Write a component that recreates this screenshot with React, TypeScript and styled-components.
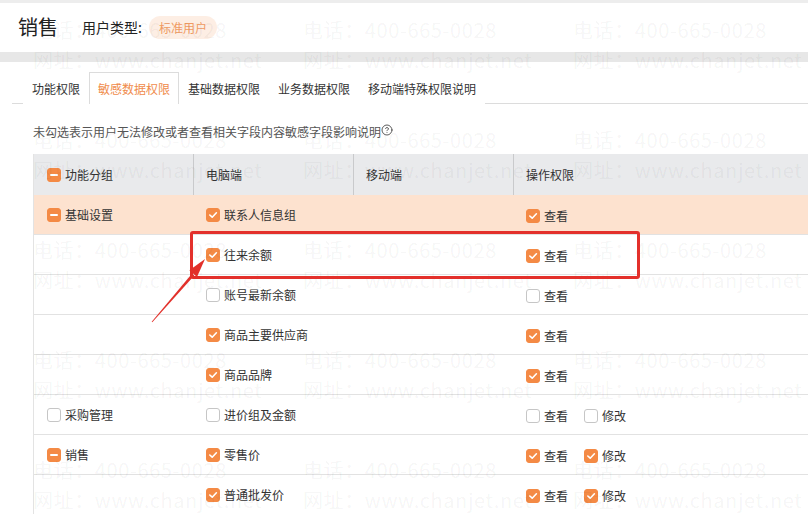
import React from "react";
import styled, { createGlobalStyle } from "styled-components";
import { CircleHelp } from "lucide-react";

type Mark = "checked" | "empty" | "partial";

interface Option {
  label: string;
  mark: Mark;
}

interface FieldRow {
  group?: Option;
  field: Option;
  ops: Option[];
  active?: boolean;
}

const view = (mark: Mark): Option => ({ label: "查看", mark });
const edit = (mark: Mark): Option => ({ label: "修改", mark });

const tabs = ["功能权限", "敏感数据权限", "基础数据权限", "业务数据权限", "移动端特殊权限说明"];

const rows: FieldRow[] = [
  {
    group: { label: "基础设置", mark: "partial" },
    field: { label: "联系人信息组", mark: "checked" },
    ops: [view("checked")],
    active: true,
  },
  { field: { label: "往来余额", mark: "checked" }, ops: [view("checked")] },
  { field: { label: "账号最新余额", mark: "empty" }, ops: [view("empty")] },
  { field: { label: "商品主要供应商", mark: "checked" }, ops: [view("checked")] },
  { field: { label: "商品品牌", mark: "checked" }, ops: [view("checked")] },
  {
    group: { label: "采购管理", mark: "empty" },
    field: { label: "进价组及金额", mark: "empty" },
    ops: [view("empty"), edit("empty")],
  },
  {
    group: { label: "销售", mark: "partial" },
    field: { label: "零售价", mark: "checked" },
    ops: [view("checked"), edit("checked")],
  },
  { field: { label: "普通批发价", mark: "checked" }, ops: [view("checked"), edit("checked")] },
];

const Box: React.FC<{ mark: Mark }> = ({ mark }) => (
  <CheckBox $on={mark !== "empty"}>
    {mark === "checked" && (
      <svg width="10" height="10" viewBox="0 0 10 10">
        <polyline points="1.8,5 4.2,7.2 8.4,2.8" fill="none" stroke="#fff" strokeWidth="1.6" strokeLinecap="round" strokeLinejoin="round" />
      </svg>
    )}
    {mark === "partial" && <Dash />}
  </CheckBox>
);

const Check: React.FC<Option> = ({ label, mark }) => (
  <CheckItem>
    <Box mark={mark} />
    <span>{label}</span>
  </CheckItem>
);

const App: React.FC = () => (
  <>
    <GlobalStyle />
    <Page>
      <TopStrip />
      <TitleBar>
        <Title>销售</Title>
        <TypeLabel>用户类型:</TypeLabel>
        <Badge>标准用户</Badge>
      </TitleBar>
      <Band />
      <TabBar>
        {tabs.map((t, i) => (
          <Tab key={t} $active={i === 1}>
            {t}
          </Tab>
        ))}
      </TabBar>
      <Hint>
        未勾选表示用户无法修改或者查看相关字段内容敏感字段影响说明
        <CircleHelp size={12} strokeWidth={1.6} />
      </Hint>
      <Table>
        <HeadRow>
          <HeadCell>
            <Check label="功能分组" mark="partial" />
          </HeadCell>
          <HeadCell $divider>电脑端</HeadCell>
          <HeadCell $divider>移动端</HeadCell>
          <HeadCell $divider>操作权限</HeadCell>
        </HeadRow>
        {rows.map((r) => (
          <BodyRow key={r.field.label} $active={r.active}>
            <Cell>{r.group && <Check {...r.group} />}</Cell>
            <Cell>
              <Check {...r.field} />
            </Cell>
            <Cell />
            <Cell $low>
              {r.ops.map((o) => (
                <Check key={o.label} {...o} />
              ))}
            </Cell>
          </BodyRow>
        ))}
      </Table>

      <Watermark>
        {Array.from({ length: 15 }, (_, i) => (
          <MarkBlock key={i}>
            <div>电话：400-665-0028</div>
            <div>网址：www.chanjet.net</div>
          </MarkBlock>
        ))}
      </Watermark>

      <Callout />
      <Arrow width="80" height="90" viewBox="0 0 80 90">
        <polygon points="1.7,81.7 2.3,82.3 44.3,35.6 42.1,33.6" fill="#e2302a" />
        <polygon points="55,19 47,36.9 39.4,30.3" fill="#e2302a" />
      </Arrow>
    </Page>
  </>
);

const GlobalStyle = createGlobalStyle`
  html, body {
    margin: 0;
    padding: 0;
    background: #fff;
  }
  body {
    font-family: "Noto Sans CJK SC", "Noto Sans", sans-serif;
    color: #333;
  }
`;

const Page = styled.div`
  position: relative;
  height: 514px;
  overflow: hidden;
  background: #fff;
`;

const TopStrip = styled.div`
  height: 3px;
  background: #ededed;
`;

const TitleBar = styled.div`
  height: 49px;
  display: flex;
  align-items: center;
  padding-left: 18px;
  padding-bottom: 1px;
  box-sizing: border-box;
`;

const Title = styled.h1`
  margin: 0 24px 0 0;
  font-size: 20px;
  font-weight: 400;
  line-height: 28px;
  color: #222;
`;

const TypeLabel = styled.span`
  font-size: 14px;
  line-height: 20px;
  color: #222;
  margin-right: 7px;
`;

const Badge = styled.span`
  font-size: 12px;
  line-height: 23px;
  padding: 0 10px;
  border-radius: 12px;
  background: #fdeee4;
  color: #f09a62;
`;

const Band = styled.div`
  height: 10px;
  background: #e7e7e7;
`;

const TabBar = styled.div`
  display: flex;
  margin: 10px 0 0 12px;
  padding-left: 11px;
  height: 31px;
  border-bottom: 1px solid #dcdcdc;
`;

const Tab = styled.div<{ $active?: boolean }>`
  display: flex;
  align-items: center;
  padding: 0 8px;
  font-size: 12px;
  color: ${(p) => (p.$active ? "#f08c4c" : "#333")};
  border: 1px solid ${(p) => (p.$active ? "#dcdcdc" : "transparent")};
  border-bottom: none;
  background: #fff;
  margin-bottom: -1px;
  height: 32px;
  box-sizing: border-box;
`;

const Hint = styled.div`
  display: flex;
  align-items: flex-start;
  margin: 18px 0 12px 33px;
  font-size: 12px;
  line-height: 20px;
  color: #555;

  svg {
    margin-top: 2px;
    margin-left: 0;
    color: #333;
  }
`;

const Table = styled.div`
  margin-left: 33px;
  border-left: 1px solid #e3e3e3;
`;

const HeadRow = styled.div`
  display: grid;
  grid-template-columns: 159px 160px 160px 1fr;
  height: 41px;
  background: #e9eaec;
`;

const HeadCell = styled.div<{ $divider?: boolean }>`
  display: flex;
  align-items: center;
  padding-left: ${(p) => (p.$divider ? "12px" : "13px")};
  font-size: 12px;
  color: #333;
  border-left: ${(p) => (p.$divider ? "1px solid #c9cacc" : "none")};
`;

const BodyRow = styled.div<{ $active?: boolean }>`
  display: grid;
  grid-template-columns: 159px 160px 160px 1fr;
  height: 40px;
  box-sizing: border-box;
  border-bottom: 1px solid #e2e2e2;
  background: ${(p) => (p.$active ? "#fde2cf" : "transparent")};
`;

const Cell = styled.div<{ $low?: boolean }>`
  display: flex;
  align-items: center;
  gap: 16px;
  padding-left: 13px;
  padding-top: ${(p) => (p.$low ? "3px" : "1px")};
  font-size: 12px;
  color: #333;
`;

const CheckItem = styled.label`
  display: inline-flex;
  align-items: center;
  gap: 4px;
  font-size: 12px;
  line-height: 16px;
`;

const CheckBox = styled.span<{ $on: boolean }>`
  width: 14px;
  height: 14px;
  box-sizing: border-box;
  border-radius: 3px;
  display: inline-flex;
  align-items: center;
  justify-content: center;
  background: ${(p) => (p.$on ? "#f48a45" : "#fff")};
  border: 1px solid ${(p) => (p.$on ? "#f48a45" : "#c6c6c6")};
`;

const Dash = styled.span`
  width: 8px;
  height: 2px;
  border-radius: 1px;
  background: #fff;
`;

const Watermark = styled.div`
  position: absolute;
  left: 33px;
  top: 15px;
  display: grid;
  grid-template-columns: repeat(3, 270px);
  grid-auto-rows: 60px;
  row-gap: 50px;
  pointer-events: none;
`;

const MarkBlock = styled.div`
  font-size: 20px;
  line-height: 30px;
  letter-spacing: 0.6px;
  white-space: nowrap;
  color: rgba(0, 0, 0, 0.05);
`;

const Callout = styled.div`
  position: absolute;
  left: 190px;
  top: 231px;
  width: 450px;
  height: 48px;
  box-sizing: border-box;
  border: 3px solid #e3302b;
  border-radius: 3px;
`;

const Arrow = styled.svg`
  position: absolute;
  left: 150px;
  top: 240px;
`;

export default App;
